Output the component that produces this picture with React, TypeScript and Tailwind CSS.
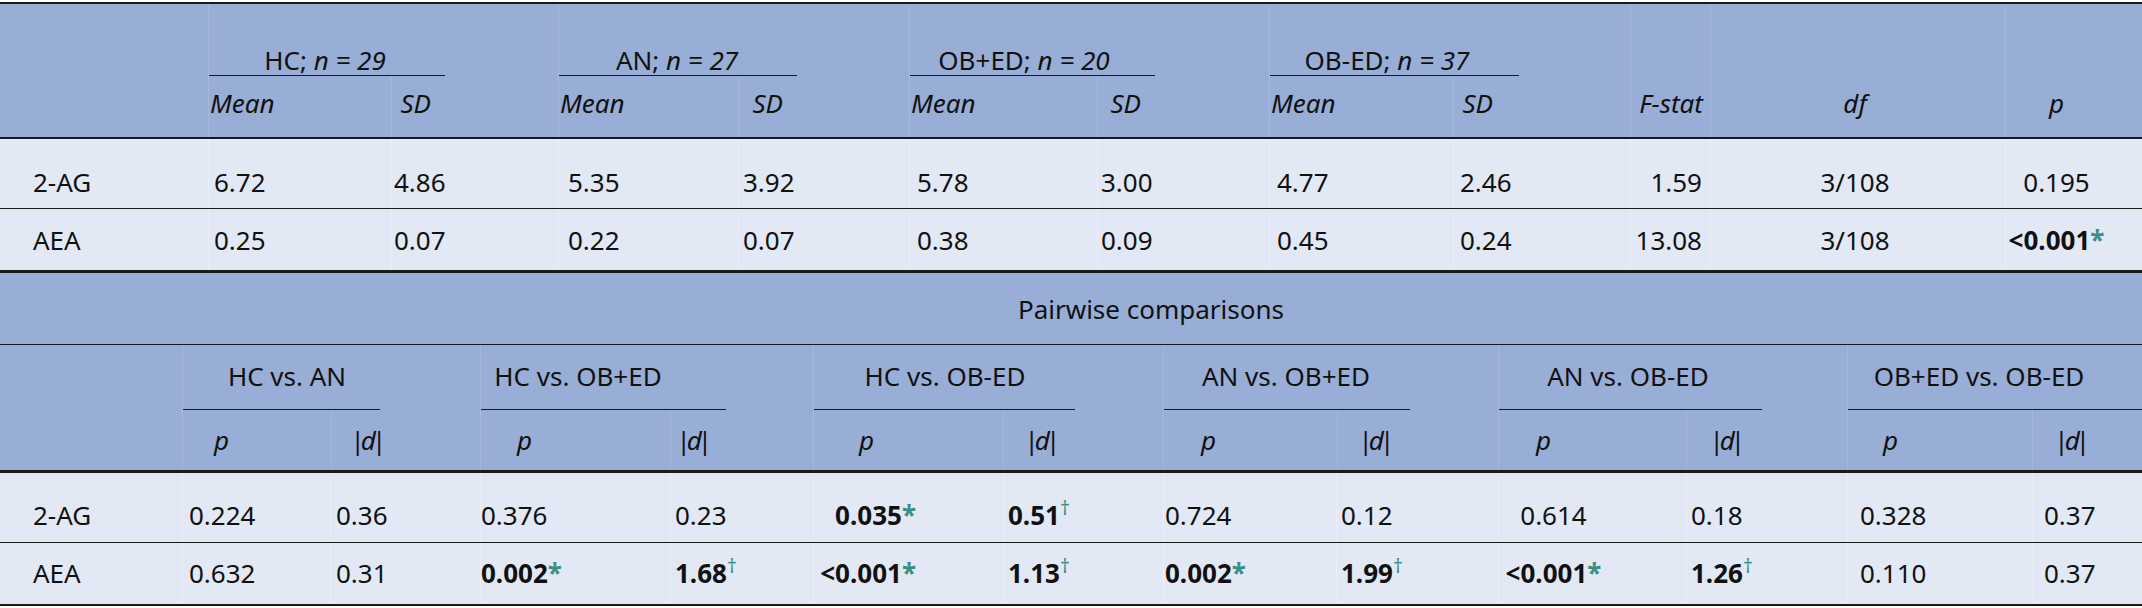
import React from "react";

type Cell = { cls: string; content?: React.ReactNode };

const Star = () => <span className="text-[#3a8e85] font-bold">*</span>;
const Dag = () => <sup className="text-[#3a8e85]">†</sup>;
const Bp = ({ v }: { v: string }) => (
  <span>
    <b className="font-bold">{v}</b>
    <Star />
  </span>
);
const Bd = ({ v }: { v: string }) => (
  <span>
    <b className="font-bold">{v}</b>
    <Dag />
  </span>
);
const D = () => (
  <span>
    <span className="-ml-[4px] mr-[-4px]">|</span>
    <i>d</i>
    <span className="-ml-[4px]">|</span>
  </span>
);

function Row({ h, pt, bg, cells }: { h: string; pt: string; bg: string; cells: Cell[] }) {
  return (
    <div className={`flex ${h} ${bg}`}>
      {cells.map((c, i) => (
        <div
          key={i}
          className={`${c.cls} ${pt} h-full whitespace-nowrap ${i > 0 ? "border-l border-[#e9eef8]" : ""}`}
        >
          {c.content}
        </div>
      ))}
    </div>
  );
}

function TopGroup({
  outer,
  textW,
  lineW,
  label,
  meanCls,
  sdCls,
}: {
  outer: string;
  textW: string;
  lineW: string;
  label: React.ReactNode;
  meanCls: string;
  sdCls: string;
}) {
  return (
    <div className={`${outer} flex flex-col border-l border-[#a6b9dc]`}>
      <div className={`${textW} h-[71px] pt-[41px] text-center whitespace-nowrap`}>{label}</div>
      <div className={`${lineW} h-px bg-[#1a1a1a]`} />
      <div className="flex h-[61px] italic">
        <div className={`${meanCls} pt-[12px]`}>Mean</div>
        <div className={`${sdCls} pt-[12px] border-l border-[#a6b9dc]`}>SD</div>
      </div>
    </div>
  );
}

function BotGroup({
  outer,
  textW,
  lineW,
  label,
  pCls,
  dCls,
}: {
  outer: string;
  textW: string;
  lineW: string;
  label: string;
  pCls: string;
  dCls: string;
}) {
  return (
    <div className={`${outer} flex flex-col border-l border-[#a6b9dc]`}>
      <div className={`${textW} h-[64px] pt-[16px] text-center whitespace-nowrap`}>{label}</div>
      <div className={`${lineW} h-px bg-[#1a1a1a]`} />
      <div className="flex h-[60px]">
        <div className={`${pCls} pt-[15px] italic`}>p</div>
        <div className={`${dCls} pt-[15px] border-l border-[#a6b9dc]`}>
          <D />
        </div>
      </div>
    </div>
  );
}

const topCls = [
  "w-[208px] pl-[33px]",
  "w-[183px] pl-[5px]",
  "w-[167px] pl-[2px]",
  "w-[180px] pl-[9px]",
  "w-[171px] pl-[4px]",
  "w-[188px] pl-[7px]",
  "w-[172px] pl-[3px]",
  "w-[184px] pl-[7px]",
  "w-[177px] pl-[6px]",
  "w-[80px] pr-[8px] text-right",
  "w-[295px] pr-[6px] text-center",
  "w-[137px] pr-[35px] text-center",
];

const botCls = [
  "w-[182px] pl-[33px]",
  "w-[148px] pl-[6px]",
  "w-[150px] pl-[5px]",
  "w-[190px] pl-0",
  "w-[143px] pl-[4px]",
  "w-[190px] pr-[87px] text-right",
  "w-[160px] pl-[4px]",
  "w-[173px] pl-[1px]",
  "w-[162px] pl-[4px]",
  "w-[188px] pr-[78px] text-center",
  "w-[161px] pl-[4px]",
  "w-[185px] pl-[12px]",
  "w-[110px] pl-[11px]",
];

const mk = (cls: string[], vals: React.ReactNode[]): Cell[] => cls.map((c, i) => ({ cls: c, content: vals[i] }));

export default function App() {
  const HEAD = "bg-[#98aed6]";
  const BODY = "bg-[#e2e8f4]";
  return (
    <div className="w-[2142px] h-[608px] bg-white pt-[2px] font-['Noto_Sans',sans-serif] text-[26px] leading-[30px] text-[#111111]">
      <div className="h-[2px] bg-[#1a1a1a]" />
      <div className={`flex h-[133px] ${HEAD}`}>
        <div className="w-[208px]" />
        <TopGroup
          outer="w-[350px]"
          textW="w-[232px]"
          lineW="w-[236px]"
          label={
            <>
              HC; <i>n = 29</i>
            </>
          }
          meanCls="w-[183px] pl-px"
          sdCls="w-[167px] pl-[8px]"
        />
        <TopGroup
          outer="w-[351px]"
          textW="w-[236px]"
          lineW="w-[238px]"
          label={
            <>
              AN; <i>n = 27</i>
            </>
          }
          meanCls="w-[180px] pl-px"
          sdCls="w-[171px] pl-[13px]"
        />
        <TopGroup
          outer="w-[360px]"
          textW="w-[228px]"
          lineW="w-[245px]"
          label={
            <>
              OB+ED; <i>n = 20</i>
            </>
          }
          meanCls="w-[188px] pl-px"
          sdCls="w-[172px] pl-[12px]"
        />
        <TopGroup
          outer="w-[361px]"
          textW="w-[234px]"
          lineW="w-[249px]"
          label={
            <>
              OB-ED; <i>n = 37</i>
            </>
          }
          meanCls="w-[184px] pl-px"
          sdCls="w-[177px] pl-[8px]"
        />
        <div className="w-[80px] pt-[84px] pr-[7px] text-right italic border-l border-[#a6b9dc]">F-stat</div>
        <div className="w-[295px] pt-[84px] pr-[6px] text-center italic border-l border-[#a6b9dc]">df</div>
        <div className="w-[137px] pt-[84px] pr-[35px] text-center italic border-l border-[#a6b9dc]">p</div>
      </div>
      <div className="h-[2px] bg-[#1a1a1a]" />
      <Row
        h="h-[69px]"
        pt="pt-[28px]"
        bg={BODY}
        cells={mk(topCls, ["2-AG", "6.72", "4.86", "5.35", "3.92", "5.78", "3.00", "4.77", "2.46", "1.59", "3/108", "0.195"])}
      />
      <div className="h-px bg-[#1a1a1a]" />
      <Row
        h="h-[61px]"
        pt="pt-[16px]"
        bg={BODY}
        cells={mk(topCls, [
          "AEA",
          "0.25",
          "0.07",
          "0.22",
          "0.07",
          "0.38",
          "0.09",
          "0.45",
          "0.24",
          "13.08",
          "3/108",
          <Bp v="<0.001" />,
        ])}
      />
      <div className="h-[3px] bg-[#1a1a1a]" />
      <div className={`h-[71px] pt-[21px] pl-[160px] text-center ${HEAD}`}>Pairwise comparisons</div>
      <div className="h-px bg-[#1a1a1a]" />
      <div className={`flex h-[125px] ${HEAD}`}>
        <div className="w-[182px]" />
        <BotGroup outer="w-[298px]" textW="w-[208px]" lineW="w-[197px]" label="HC vs. AN" pCls="w-[148px] pl-[31px]" dCls="w-[150px] pl-[23px]" />
        <BotGroup outer="w-[333px]" textW="w-[194px]" lineW="w-[245px]" label="HC vs. OB+ED" pCls="w-[190px] pl-[36px]" dCls="w-[143px] pl-[9px]" />
        <BotGroup outer="w-[350px]" textW="w-[262px]" lineW="w-[261px]" label="HC vs. OB-ED" pCls="w-[190px] pl-[45px]" dCls="w-[160px] pl-[24px]" />
        <BotGroup outer="w-[335px]" textW="w-[244px]" lineW="w-[246px]" label="AN vs. OB+ED" pCls="w-[173px] pl-[37px]" dCls="w-[162px] pl-[25px]" />
        <BotGroup outer="w-[349px]" textW="w-[258px]" lineW="w-[263px]" label="AN vs. OB-ED" pCls="w-[188px] pl-[37px]" dCls="w-[161px] pl-[26px]" />
        <BotGroup outer="w-[295px]" textW="w-[262px]" lineW="w-[295px]" label="OB+ED vs. OB-ED" pCls="w-[185px] pl-[35px]" dCls="w-[110px] pl-[25px]" />
      </div>
      <div className="h-[3px] bg-[#1a1a1a]" />
      <Row
        h="h-[69px]"
        pt="pt-[27px]"
        bg={BODY}
        cells={mk(botCls, [
          "2-AG",
          "0.224",
          "0.36",
          "0.376",
          "0.23",
          <Bp v="0.035" />,
          <Bd v="0.51" />,
          "0.724",
          "0.12",
          "0.614",
          "0.18",
          "0.328",
          "0.37",
        ])}
      />
      <div className="h-px bg-[#1a1a1a]" />
      <Row
        h="h-[61px]"
        pt="pt-[15px]"
        bg={BODY}
        cells={mk(botCls, [
          "AEA",
          "0.632",
          "0.31",
          <Bp v="0.002" />,
          <Bd v="1.68" />,
          <Bp v="<0.001" />,
          <Bd v="1.13" />,
          <Bp v="0.002" />,
          <Bd v="1.99" />,
          <Bp v="<0.001" />,
          <Bd v="1.26" />,
          "0.110",
          "0.37",
        ])}
      />
      <div className="h-[2px] bg-[#1a1a1a]" />
    </div>
  );
}
